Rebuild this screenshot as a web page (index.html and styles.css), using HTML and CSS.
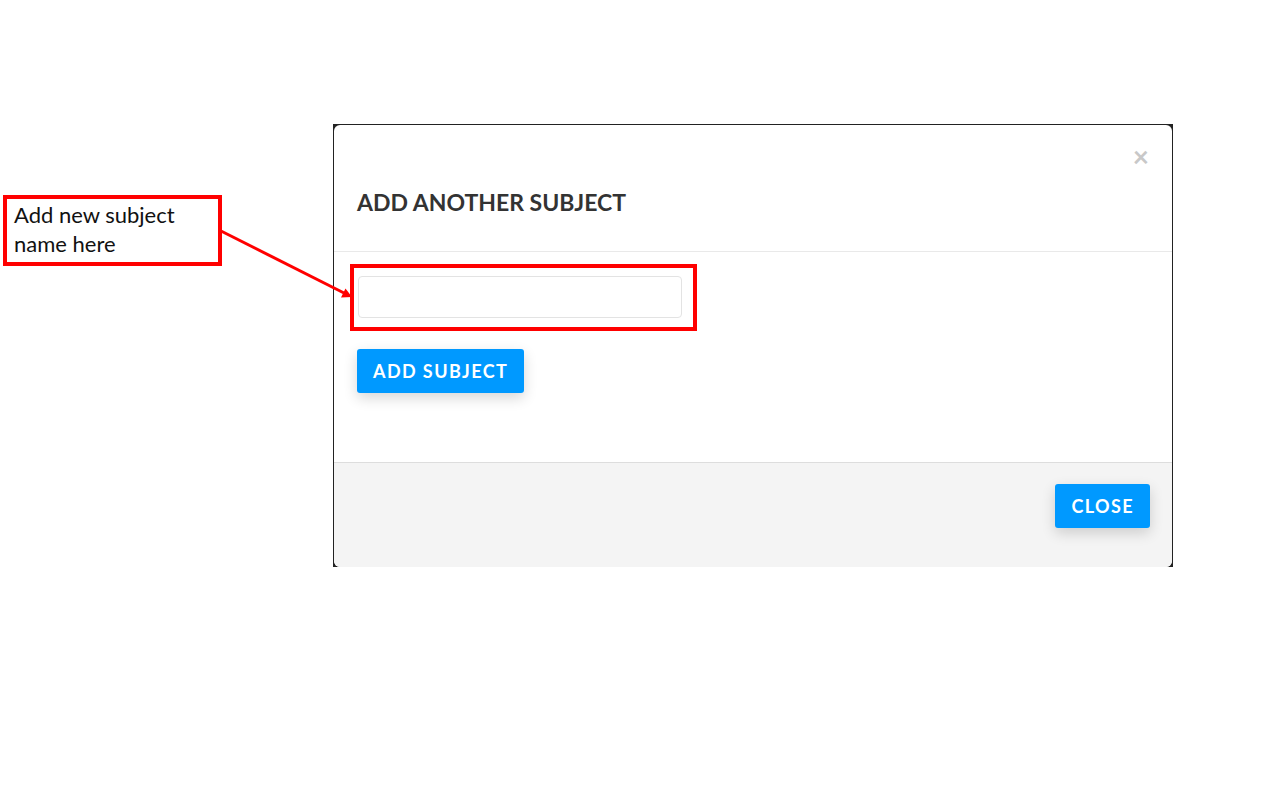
FILE: index.html
```html
<!DOCTYPE html>
<html>
<head>
<meta charset="utf-8">
<link rel="stylesheet" href="styles.css">
</head>
<body>
<div class="page">
  <div class="frame">
    <div class="modal">
      <div class="modal-header">
        <button class="close" type="button">×</button>
        <h4 class="modal-title">ADD ANOTHER SUBJECT</h4>
      </div>
      <div class="modal-body">
        <input class="field" type="text">
        <button class="btn" type="button">ADD SUBJECT</button>
      </div>
      <div class="modal-footer">
        <button class="btn" type="button">CLOSE</button>
      </div>
    </div>
  </div>
</div>

<div class="callout">Add new subject name here</div>
<div class="highlight"></div>
<svg class="arrow" width="1280" height="801" viewBox="0 0 1280 801">
  <line x1="221" y1="231" x2="344" y2="293" stroke="#ff0000" stroke-width="3"/>
  <polygon points="352,297 341,297.5 345.5,288.5" fill="#ff0000"/>
</svg>
</body>
</html>
```
FILE: styles.css
```css
html, body {
  margin: 0;
  padding: 0;
  background: #ffffff;
}

body {
  width: 1280px;
  height: 801px;
  overflow: hidden;
  position: relative;
  font-family: Lato, "Open Sans", sans-serif;
}

.page {
  padding: 124px 0 0 333px;
}

.frame {
  width: 838px;
  height: 442px;
  background: #222222;
  padding: 1px 1px 0 1px;
}

.modal {
  height: 100%;
  background: #ffffff;
  border-radius: 6px;
  display: flex;
  flex-direction: column;
  overflow: hidden;
}

.modal-header {
  position: relative;
  height: 127px;
  border-bottom: 1px solid #e9e9e9;
  box-sizing: border-box;
  padding: 0 23px;
  display: flex;
  align-items: flex-end;
}

.modal-title {
  margin: 0 0 37px 0;
  font-size: 23px;
  font-weight: 700;
  color: #333333;
  line-height: 1;
}

.close {
  position: absolute;
  top: 17px;
  right: 23px;
  border: 0;
  background: none;
  padding: 0;
  font-family: Lato, sans-serif;
  font-size: 28px;
  font-weight: 700;
  color: #c8c8c8;
  line-height: 1;
}

.modal-body {
  flex: 1;
  padding: 24px 23px 0 23px;
  display: flex;
  flex-direction: column;
  align-items: flex-start;
  gap: 31px;
}

.field {
  margin: 0 0 0 1px;
  width: 324px;
  height: 42px;
  box-sizing: border-box;
  border: 1px solid #e3e3e3;
  border-radius: 4px;
  background: #ffffff;
  outline: none;
}

.btn {
  height: 44px;
  box-sizing: border-box;
  padding: 0 16px;
  border: 0;
  border-radius: 3px;
  background: #0099ff;
  color: #ffffff;
  font-family: Lato, sans-serif;
  font-size: 18px;
  font-weight: 700;
  letter-spacing: 1.4px;
  box-shadow: 0 5px 14px rgba(0, 0, 0, 0.16);
}

.modal-footer {
  height: 105px;
  box-sizing: border-box;
  border-top: 1px solid #dddddd;
  background: #f4f4f4;
  padding: 21px 22px 0 0;
  display: flex;
  justify-content: flex-end;
  align-items: flex-start;
}

.callout {
  position: absolute;
  left: 3px;
  top: 195px;
  width: 219px;
  height: 71px;
  box-sizing: border-box;
  border: 4px solid #ff0000;
  padding: 1px 0 0 7px;
  font-family: Lato, "Open Sans", sans-serif;
  font-size: 22px;
  line-height: 29px;
  color: #111111;
}

.highlight {
  position: absolute;
  left: 350px;
  top: 264px;
  width: 347px;
  height: 67px;
  box-sizing: border-box;
  border: 4px solid #ff0000;
}

.arrow {
  position: absolute;
  left: 0;
  top: 0;
  pointer-events: none;
}
```
